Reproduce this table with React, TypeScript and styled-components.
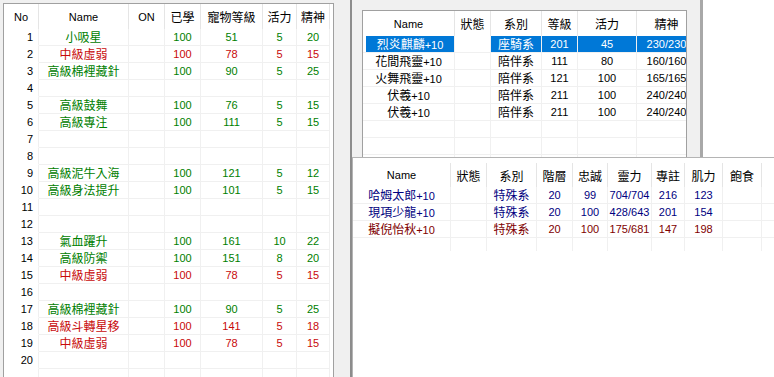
import * as React from "react";
import styled, { createGlobalStyle } from "styled-components";

type Align = "left" | "center" | "right";

interface Column {
  title: string;
  width: number;
  align?: Align;
  rowHeader?: boolean;
}

interface RowData {
  cells: string[];
  color?: string;
  selected?: boolean;
}

const GREEN = "#008000";
const RED = "#c80a0a";
const NAVY = "#000080";
const MAROON = "#800000";

const skillColumns: Column[] = [
  { title: "No", width: 35, align: "right", rowHeader: true },
  { title: "Name", width: 90 },
  { title: "ON", width: 36 },
  { title: "已學", width: 36 },
  { title: "寵物等級", width: 62 },
  { title: "活力", width: 34 },
  { title: "精神", width: 33 },
];

const skill = (no: number, name?: string, c?: string[], color?: string): RowData =>
  name ? { cells: [String(no), name, "", ...(c || [])], color } : { cells: [String(no)] };

const skillRows: RowData[] = [
  skill(1, "小吸星", ["100", "51", "5", "20"], GREEN),
  skill(2, "中級虛弱", ["100", "78", "5", "15"], RED),
  skill(3, "高級棉裡藏針", ["100", "90", "5", "25"], GREEN),
  skill(4),
  skill(5, "高級鼓舞", ["100", "76", "5", "15"], GREEN),
  skill(6, "高級專注", ["100", "111", "5", "15"], GREEN),
  skill(7),
  skill(8),
  skill(9, "高級泥牛入海", ["100", "121", "5", "12"], GREEN),
  skill(10, "高級身法提升", ["100", "101", "5", "15"], GREEN),
  skill(11),
  skill(12),
  skill(13, "氣血躍升", ["100", "161", "10", "22"], GREEN),
  skill(14, "高級防禦", ["100", "151", "8", "20"], GREEN),
  skill(15, "中級虛弱", ["100", "78", "5", "15"], RED),
  skill(16),
  skill(17, "高級棉裡藏針", ["100", "90", "5", "25"], GREEN),
  skill(18, "高級斗轉星移", ["100", "141", "5", "18"], RED),
  skill(19, "中級虛弱", ["100", "78", "5", "15"], RED),
  skill(20),
  { cells: [""] },
];

const petColumns: Column[] = [
  { title: "Name", width: 92 },
  { title: "狀態", width: 36 },
  { title: "系別", width: 51 },
  { title: "等級", width: 36 },
  { title: "活力", width: 59 },
  { title: "精神", width: 60 },
];

const petRows: RowData[] = [
  { cells: ["烈炎麒麟+10", "", "座騎系", "201", "45", "230/230"], selected: true },
  { cells: ["花間飛靈+10", "", "陪伴系", "111", "80", "160/160"] },
  { cells: ["火舞飛靈+10", "", "陪伴系", "121", "100", "165/165"] },
  { cells: ["伏羲+10", "", "陪伴系", "211", "100", "240/240"] },
  { cells: ["伏羲+10", "", "陪伴系", "211", "100", "240/240"] },
  { cells: [] },
  { cells: [] },
  { cells: [] },
];

const mateColumns: Column[] = [
  { title: "Name", width: 98 },
  { title: "狀態", width: 36 },
  { title: "系別", width: 50 },
  { title: "階層", width: 36 },
  { title: "忠誠", width: 35 },
  { title: "靈力", width: 44 },
  { title: "專註", width: 33 },
  { title: "肌力", width: 38 },
  { title: "飽食", width: 39 },
  { title: "", width: 40 },
];

const mateRows: RowData[] = [
  { cells: ["哈姆太郎+10", "", "特殊系", "20", "99", "704/704", "216", "123", ""], color: NAVY },
  { cells: ["現項少龍+10", "", "特殊系", "20", "100", "428/643", "201", "154", ""], color: NAVY },
  { cells: ["擬倪怡秋+10", "", "特殊系", "20", "100", "175/681", "147", "198", ""], color: MAROON },
  { cells: [] },
];

// CJK runs get the larger CJK font, the rest stays in the narrow latin face
function Label({ text }: { text: string }) {
  const parts = text.split(/([\u3000-\u9fff\uf900-\ufaff]+)/).filter(Boolean);
  return (
    <>
      {parts.map((p, i) =>
        /[\u3000-\u9fff\uf900-\ufaff]/.test(p) ? <Han key={i}>{p}</Han> : <span key={i}>{p}</span>
      )}
    </>
  );
}

function ListView(props: {
  columns: Column[];
  rows: RowData[];
  width?: number;
  height?: number;
  headerHeight: number;
  headerPad?: number;
  bodyHeight?: number;
}) {
  const cols = props.columns.map((c) => c.width + "px").join(" ");
  return (
    <ListBox $width={props.width} $height={props.height}>
      <HeaderRow $cols={cols} $height={props.headerHeight} $padTop={props.headerPad || 0}>
        {props.columns.map((c, i) => (
          <HeaderCell key={i}>
            <Label text={c.title} />
          </HeaderCell>
        ))}
      </HeaderRow>
      <Body $height={props.bodyHeight}>
        {props.rows.map((r, ri) => (
          <Row key={ri} $cols={cols}>
            {props.columns.map((c, ci) => {
              const hl = !!r.selected && ci !== 1;
              return (
                <Cell
                  key={ci}
                  $align={c.align || "center"}
                  $color={c.rowHeader ? "#000" : r.color || "#000"}
                  $lined={!c.rowHeader}
                  $hl={hl}
                  $inset={hl && ci === 0}
                >
                  <Label text={r.cells[ci] || ""} />
                </Cell>
              );
            })}
          </Row>
        ))}
      </Body>
    </ListBox>
  );
}

export default function App() {
  return (
    <>
      <GlobalStyle />
      <Screen>
        <LeftPane>
          <ListView columns={skillColumns} rows={skillRows} width={331} height={390} headerHeight={25} />
        </LeftPane>
        <Splitter />
        <RightPane>
          <TopRow>
            <PetFrame>
              <ListView columns={petColumns} rows={petRows} width={325} height={170} headerHeight={25} />
            </PetFrame>
          </TopRow>
          <MateBox>
            <ListView columns={mateColumns} rows={mateRows} headerHeight={29} headerPad={5} bodyHeight={64} />
          </MateBox>
        </RightPane>
      </Screen>
    </>
  );
}

const GlobalStyle = createGlobalStyle`
  body {
    margin: 0;
    background: #fff;
    font-family: "Liberation Sans", "Noto Sans CJK TC", sans-serif;
    font-size: 11px;
  }
  * { box-sizing: border-box; }
`;

const Han = styled.span`
  font-family: "Noto Sans CJK TC", sans-serif;
  font-size: 12px;
`;

const Screen = styled.div`
  display: flex;
  width: 774px;
  height: 377px;
  overflow: hidden;
  background: #fff;
`;

const LeftPane = styled.div`
  width: 350px;
  flex-shrink: 0;
  background: #f0f0f0;
  padding: 3px 0 0 3px;
`;

const Splitter = styled.div`
  width: 2px;
  flex-shrink: 0;
  background: #8c8c8c;
`;

const RightPane = styled.div`
  flex: 1;
  display: flex;
  flex-direction: column;
  min-width: 0;
`;

const TopRow = styled.div`
  display: flex;
  height: 157px;
  flex-shrink: 0;
`;

const PetFrame = styled.div`
  width: 351px;
  height: 157px;
  overflow: hidden;
  background: #f0f0f0;
  padding: 10px 0 0 10px;
  border-right: 3px solid #a8a8a8;
`;

const MateBox = styled.div`
  flex: 1;
  background: #fff;
  border-top: 1px solid #b4b4b4;
  border-left: 1px solid #b4b4b4;
  overflow: hidden;
`;

const ListBox = styled.div<{ $width?: number; $height?: number }>`
  width: ${(p) => (p.$width ? p.$width + "px" : "auto")};
  height: ${(p) => (p.$height ? p.$height + "px" : "auto")};
  border: ${(p) => (p.$width ? "1px solid #a0a0a0" : "none")};
  background: #fff;
  overflow: hidden;
  flex-shrink: 0;
`;

const Grid = styled.div<{ $cols: string }>`
  display: grid;
  grid-template-columns: ${(p) => p.$cols};
  width: max-content;
`;

const HeaderRow = styled(Grid)<{ $height: number; $padTop: number }>`
  height: ${(p) => p.$height}px;
  padding-top: ${(p) => p.$padTop}px;
`;

const HeaderCell = styled.div`
  display: flex;
  align-items: center;
  justify-content: center;
  border-right: 1px solid #e5e5e5;
  color: #000;
  white-space: nowrap;
  overflow: hidden;
`;

const Body = styled.div<{ $height?: number }>`
  height: ${(p) => (p.$height ? p.$height + "px" : "auto")};
  overflow: hidden;
`;

const Row = styled(Grid)`
  height: 17px;
`;

const Cell = styled.div<{
  $align: Align;
  $color: string;
  $lined: boolean;
  $hl: boolean;
  $inset: boolean;
}>`
  height: 17px;
  line-height: 16px;
  border-right: 1px solid #f0f0f0;
  border-bottom: 1px solid ${(p) => (p.$lined ? "#f0f0f0" : "transparent")};
  text-align: ${(p) => p.$align};
  padding: ${(p) => (p.$align === "right" ? "0 5px 0 0" : p.$inset ? "0 0 0 3px" : "0")};
  color: ${(p) => (p.$hl ? "#fff" : p.$color)};
  background: ${(p) => (p.$hl ? "#0078d7" : "transparent")};
  background-clip: content-box;
  white-space: nowrap;
  overflow: hidden;
`;
